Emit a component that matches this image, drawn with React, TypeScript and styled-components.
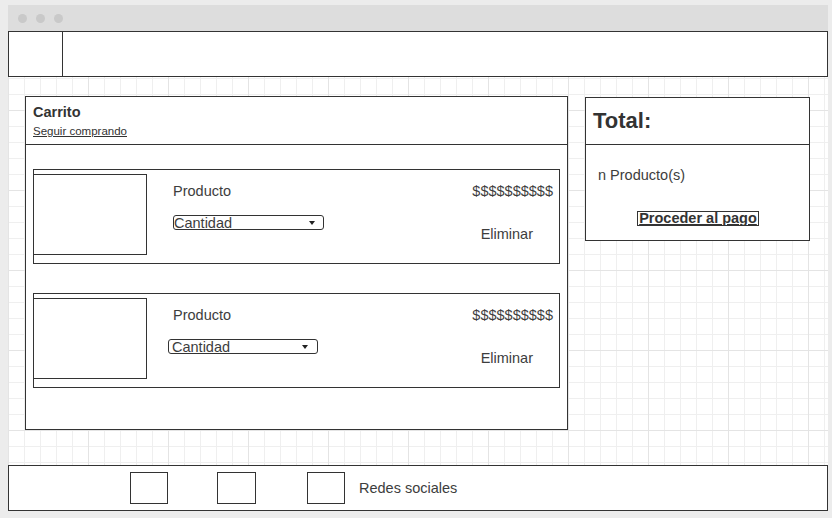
import React from "react";
import styled, { createGlobalStyle } from "styled-components";

const Global = createGlobalStyle`
  html, body { margin: 0; padding: 0; background: #ececec; }
  * { box-sizing: border-box; }
  body { font-family: "Liberation Sans", Arial, sans-serif; color: #3d3d3d; }
`;

const Window = styled.div`
  width: 820px;
  margin: 5px 0 0 8px;
  display: flex;
  flex-direction: column;
`;

const TitleBar = styled.div`
  height: 26px;
  background: #dddddd;
  display: flex;
  align-items: center;
  gap: 9px;
  padding: 0 0 0 10px;
`;

const Dot = styled.span`
  width: 9px;
  height: 9px;
  border-radius: 50%;
  background: #c9c9c9;
`;

const Canvas = styled.div`
  background-color: #fff;
  background-image:
    linear-gradient(to right, #e4e4e4 1px, transparent 1px),
    linear-gradient(to bottom, #e4e4e4 1px, transparent 1px),
    linear-gradient(to right, #efefef 1px, transparent 1px),
    linear-gradient(to bottom, #efefef 1px, transparent 1px);
  background-size: 80px 80px, 80px 80px, 16px 16px, 16px 16px;
  background-position: 0 -1px, 0 -1px, 0 -1px, 0 -1px;
  display: flex;
  flex-direction: column;
`;

const Header = styled.header`
  height: 46px;
  border: 1px solid #333;
  background: #fff;
  display: flex;
`;

const LogoCell = styled.div`
  width: 54px;
  border-right: 1px solid #333;
`;

const Main = styled.main`
  height: 388px;
  display: flex;
  align-items: flex-start;
  gap: 17px;
  padding: 19px 0 0 17px;
`;

const Panel = styled.section<{ $w: number; $h: number; $top?: number }>`
  width: ${(p) => p.$w}px;
  height: ${(p) => p.$h}px;
  margin-top: ${(p) => p.$top ?? 0}px;
  border: 1px solid #333;
  background: #fff;
  display: flex;
  flex-direction: column;
`;

const CartHead = styled.div`
  height: 48px;
  border-bottom: 1px solid #333;
  padding: 7px 0 0 7px;
`;

const CartTitle = styled.h1`
  margin: 0;
  font-size: 14.5px;
  line-height: 17px;
  font-weight: bold;
  color: #333;
`;

const KeepShopping = styled.a`
  display: block;
  margin-top: 4px;
  font-size: 11.5px;
  line-height: 13px;
  color: #333;
  text-decoration: underline;
`;

const CartBody = styled.div`
  padding: 24px 7px 0 7px;
  display: flex;
  flex-direction: column;
  gap: 29px;
`;

const Item = styled.div`
  height: 95px;
  border: 1px solid #333;
  display: flex;
  align-items: flex-start;
`;

const Thumb = styled.div`
  width: 114px;
  height: 81px;
  margin: 4px 0 0 -1px;
  border: 1px solid #333;
`;

const Info = styled.div`
  margin-left: 26px;
  padding-top: 13px;
  display: flex;
  flex-direction: column;
  align-items: flex-start;
`;

const Text = styled.span`
  font-size: 14.5px;
  line-height: 17px;
  white-space: nowrap;
`;

const Select = styled.div<{ $shift: number; $w: number; $pad: number; $arrow: number }>`
  position: relative;
  margin: 15px 0 0 ${(p) => p.$shift}px;
  width: ${(p) => p.$w}px;
  height: 15px;
  border: 1px solid #333;
  border-radius: 3px;
  padding: 1px 0 0 ${(p) => p.$pad}px;
  font-size: 14.5px;
  line-height: 13px;
  white-space: nowrap;
  &::after {
    content: "";
    position: absolute;
    right: ${(p) => p.$arrow}px;
    top: 5px;
    border-left: 3px solid transparent;
    border-right: 3px solid transparent;
    border-top: 4px solid #222;
  }
`;

const Side = styled.div`
  margin-left: auto;
  padding: 13px 6px 0 0;
  display: flex;
  flex-direction: column;
  align-items: flex-end;
`;

const Remove = styled.span`
  margin: 26px 20px 0 0;
  font-size: 14.5px;
  line-height: 17px;
`;

const TotalHead = styled.div`
  height: 47px;
  border-bottom: 1px solid #333;
  padding: 10px 0 0 7px;
`;

const TotalTitle = styled.h2`
  margin: 0;
  font-size: 22px;
  line-height: 25px;
  font-weight: bold;
  color: #333;
`;

const TotalBody = styled.div`
  padding: 22px 0 0 12px;
  display: flex;
  flex-direction: column;
`;

const PayButton = styled.button`
  align-self: center;
  margin: 27px 0 0 -11px;
  height: 15px;
  padding: 0 1px;
  border: 1px solid #333;
  border-radius: 0;
  background: #fff;
  font-family: "Liberation Sans", Arial, sans-serif;
  font-size: 14.5px;
  font-weight: bold;
  line-height: 13px;
  color: #333;
  text-decoration: underline;
  white-space: nowrap;
  overflow: visible;
`;

const Footer = styled.footer`
  height: 46px;
  border: 1px solid #333;
  background: #fff;
  display: flex;
  align-items: center;
  padding-left: 121px;
`;

const SocialBox = styled.div<{ $w: number; $gap: number }>`
  width: ${(p) => p.$w}px;
  height: 32px;
  margin-right: ${(p) => p.$gap}px;
  border: 1px solid #333;
`;

const items = [
  { shift: 0, w: 151, pad: 0, arrow: 8 },
  { shift: -5, w: 150, pad: 3, arrow: 9 },
];

export default function App() {
  return (
    <>
      <Global />
      <Window>
        <TitleBar>
          <Dot />
          <Dot />
          <Dot />
        </TitleBar>
        <Canvas>
          <Header>
            <LogoCell />
          </Header>
          <Main>
            <Panel $w={543} $h={334}>
              <CartHead>
                <CartTitle>Carrito</CartTitle>
                <KeepShopping>Seguir comprando</KeepShopping>
              </CartHead>
              <CartBody>
                {items.map((it, i) => (
                  <Item key={i}>
                    <Thumb />
                    <Info>
                      <Text>Producto</Text>
                      <Select $shift={it.shift} $w={it.w} $pad={it.pad} $arrow={it.arrow}>
                        Cantidad
                      </Select>
                    </Info>
                    <Side>
                      <Text>$$$$$$$$$$</Text>
                      <Remove>Eliminar</Remove>
                    </Side>
                  </Item>
                ))}
              </CartBody>
            </Panel>
            <Panel $w={225} $h={144} $top={1}>
              <TotalHead>
                <TotalTitle>Total:</TotalTitle>
              </TotalHead>
              <TotalBody>
                <Text>n Producto(s)</Text>
                <PayButton>Proceder al pago</PayButton>
              </TotalBody>
            </Panel>
          </Main>
          <Footer>
            <SocialBox $w={38} $gap={49} />
            <SocialBox $w={39} $gap={51} />
            <SocialBox $w={38} $gap={14} />
            <Text>Redes sociales</Text>
          </Footer>
        </Canvas>
      </Window>
    </>
  );
}
